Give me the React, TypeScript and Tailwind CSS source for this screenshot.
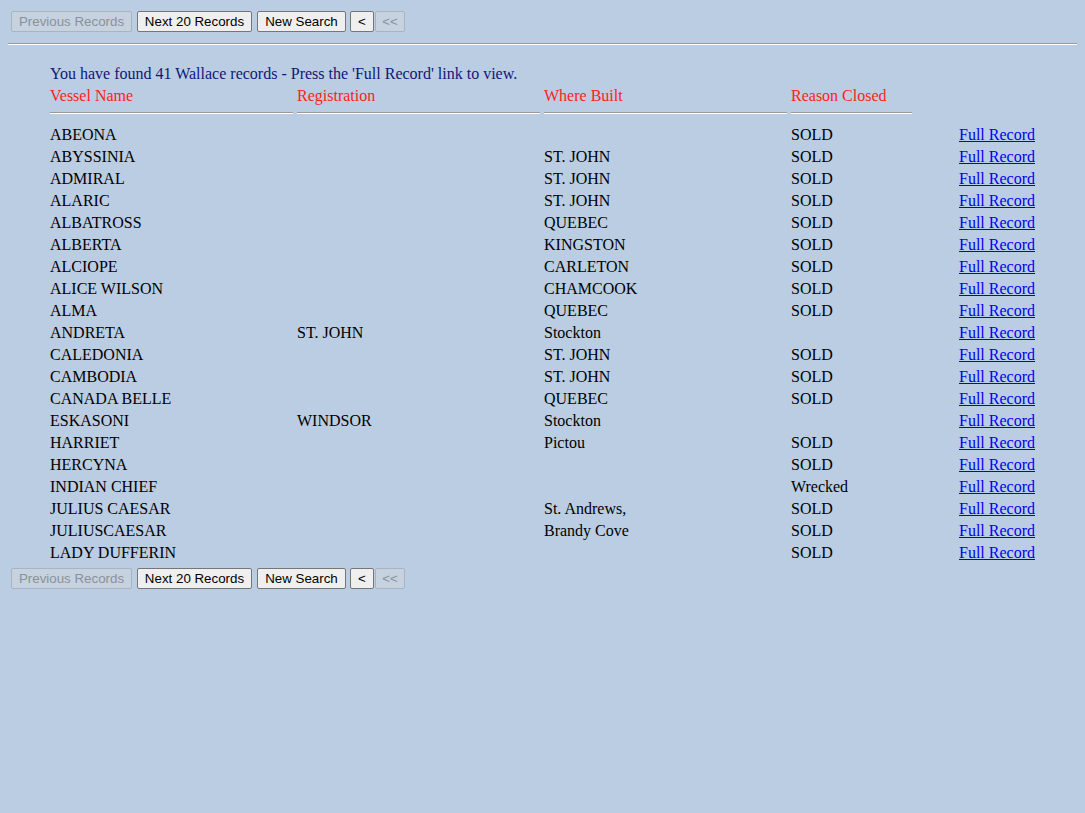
import React from 'react';

interface Vessel {
  name: string;
  registration: string;
  built: string;
  reason: string;
}

const vessels: Vessel[] = [
  { name: 'ABEONA', registration: '', built: '', reason: 'SOLD' },
  { name: 'ABYSSINIA', registration: '', built: 'ST. JOHN', reason: 'SOLD' },
  { name: 'ADMIRAL', registration: '', built: 'ST. JOHN', reason: 'SOLD' },
  { name: 'ALARIC', registration: '', built: 'ST. JOHN', reason: 'SOLD' },
  { name: 'ALBATROSS', registration: '', built: 'QUEBEC', reason: 'SOLD' },
  { name: 'ALBERTA', registration: '', built: 'KINGSTON', reason: 'SOLD' },
  { name: 'ALCIOPE', registration: '', built: 'CARLETON', reason: 'SOLD' },
  { name: 'ALICE WILSON', registration: '', built: 'CHAMCOOK', reason: 'SOLD' },
  { name: 'ALMA', registration: '', built: 'QUEBEC', reason: 'SOLD' },
  { name: 'ANDRETA', registration: 'ST. JOHN', built: 'Stockton', reason: '' },
  { name: 'CALEDONIA', registration: '', built: 'ST. JOHN', reason: 'SOLD' },
  { name: 'CAMBODIA', registration: '', built: 'ST. JOHN', reason: 'SOLD' },
  { name: 'CANADA BELLE', registration: '', built: 'QUEBEC', reason: 'SOLD' },
  { name: 'ESKASONI', registration: 'WINDSOR', built: 'Stockton', reason: '' },
  { name: 'HARRIET', registration: '', built: 'Pictou', reason: 'SOLD' },
  { name: 'HERCYNA', registration: '', built: '', reason: 'SOLD' },
  { name: 'INDIAN CHIEF', registration: '', built: '', reason: 'Wrecked' },
  { name: 'JULIUS CAESAR', registration: '', built: 'St. Andrews,', reason: 'SOLD' },
  { name: 'JULIUSCAESAR', registration: '', built: 'Brandy Cove', reason: 'SOLD' },
  { name: 'LADY DUFFERIN', registration: '', built: '', reason: 'SOLD' },
];

const btn =
  "h-[21px] px-[6px] text-[13.33px] leading-none rounded-[2px] border border-[#767676] bg-[#efefef] text-black font-['Liberation_Sans',Arial,sans-serif]";
const btnOff =
  "h-[21px] px-[6px] text-[13.33px] leading-none rounded-[2px] border border-[#a9b4c0] bg-[#c6d2e0] text-[#8a919a] font-['Liberation_Sans',Arial,sans-serif]";

function Nav() {
  return (
    <div className="flex items-center pl-[3px]">
      <button className={`${btnOff} w-[121px]`} disabled>Previous Records</button>
      <button className={`${btn} w-[115px] ml-[5px]`}>Next 20 Records</button>
      <button className={`${btn} w-[89px] ml-[5px]`}>New Search</button>
      <button className={`${btn} w-[24px] ml-[4px] px-0`}>&lt;</button>
      <button className={`${btnOff} w-[30px] ml-[1px] px-0`} disabled>&lt;&lt;</button>
    </div>
  );
}

const Rule = ({ w }: { w: string }) => (
  <div className={`${w} h-[2px] border-t border-[#9a9a9a] border-b border-b-white`} />
);

export default function App() {
  return (
    <div className="min-h-screen bg-[#bbcde2] p-2 pt-[11px] font-['Liberation_Serif','Times_New_Roman',serif] text-[16px] text-black">
      <Nav />
      <div className="mt-[11px] h-[2px] border-t border-[#9a9a9a] border-b border-b-white" />

      <div className="pl-[42px] mt-[18px]">
        <div className="h-[22px] leading-[22px] text-[#10167a]">
          You have found 41 Wallace records - Press the 'Full Record' link to view.
        </div>
        <div className="flex h-[22px] leading-[22px] text-[#ff2020]">
          <div className="w-[247px]">Vessel Name</div>
          <div className="w-[247px]">Registration</div>
          <div className="w-[247px]">Where Built</div>
          <div className="w-[124px]">Reason Closed</div>
        </div>
        <div className="flex mt-[5px]">
          <div className="w-[247px]"><Rule w="w-[243px]" /></div>
          <div className="w-[247px]"><Rule w="w-[243px]" /></div>
          <div className="w-[247px]"><Rule w="w-[243px]" /></div>
          <div className="w-[124px]"><Rule w="w-[121px]" /></div>
        </div>
        <div className="mt-[10px]">
          {vessels.map((v) => (
            <div key={v.name} className="flex h-[22px] leading-[22px]">
              <div className="w-[247px]">{v.name}</div>
              <div className="w-[247px]">{v.registration}</div>
              <div className="w-[247px]">{v.built}</div>
              <div className="w-[168px]">{v.reason}</div>
              <div>
                <a href="#" className="text-[#0000ee] underline">Full Record</a>
              </div>
            </div>
          ))}
        </div>
      </div>

      <div className="mt-[4px]">
        <Nav />
      </div>
    </div>
  );
}
